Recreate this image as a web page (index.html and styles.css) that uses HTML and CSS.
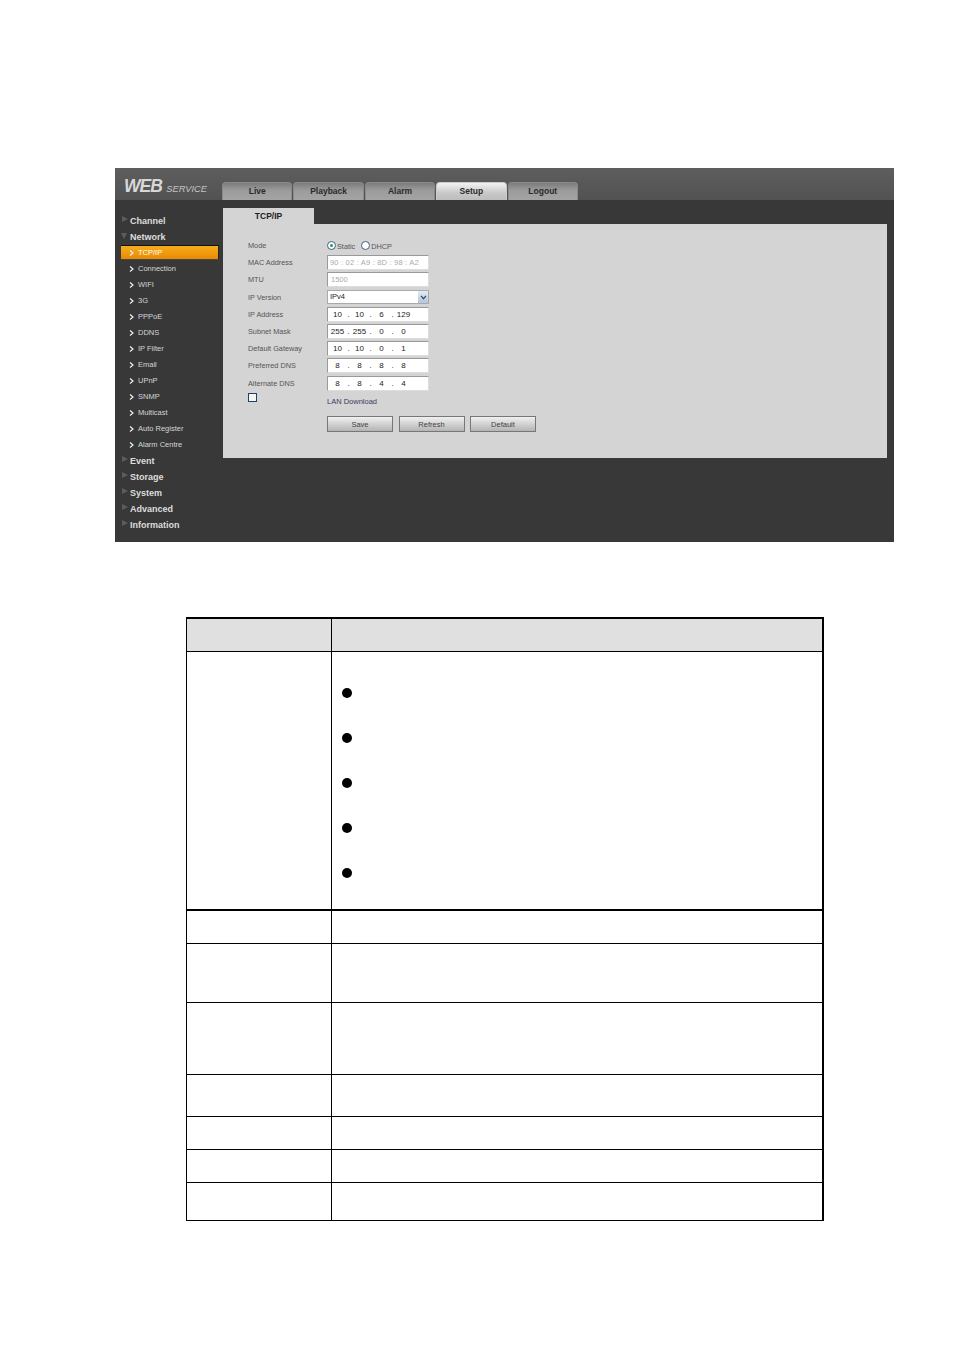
FILE: index.html
```html
<!DOCTYPE html>
<html lang="en">
<head>
    <meta charset="UTF-8">
    <title>TCP/IP Setup</title>
    <link rel="stylesheet" href="styles.css">
</head>
<body>
    <div class="shot">
        <div class="topbar">
            <div class="logo"><b>WEB</b> <span>SERVICE</span></div>
            <div class="tabs">
                <div class="tab">Live</div>
                <div class="tab">Playback</div>
                <div class="tab">Alarm</div>
                <div class="tab active">Setup</div>
                <div class="tab">Logout</div>
            </div>
        </div>
        <div class="main">
            <div class="sidebar">
                <div class="group"><i class="tri"></i>Channel</div>
                <div class="group"><i class="tri down"></i>Network</div>
                <div class="item selected"><svg viewBox="0 0 5 6"><path d="M1 .5 4 3 1 5.5"/></svg>TCP/IP</div>
                <div class="item"><svg viewBox="0 0 5 6"><path d="M1 .5 4 3 1 5.5"/></svg>Connection</div>
                <div class="item"><svg viewBox="0 0 5 6"><path d="M1 .5 4 3 1 5.5"/></svg>WIFI</div>
                <div class="item"><svg viewBox="0 0 5 6"><path d="M1 .5 4 3 1 5.5"/></svg>3G</div>
                <div class="item"><svg viewBox="0 0 5 6"><path d="M1 .5 4 3 1 5.5"/></svg>PPPoE</div>
                <div class="item"><svg viewBox="0 0 5 6"><path d="M1 .5 4 3 1 5.5"/></svg>DDNS</div>
                <div class="item"><svg viewBox="0 0 5 6"><path d="M1 .5 4 3 1 5.5"/></svg>IP Filter</div>
                <div class="item"><svg viewBox="0 0 5 6"><path d="M1 .5 4 3 1 5.5"/></svg>Email</div>
                <div class="item"><svg viewBox="0 0 5 6"><path d="M1 .5 4 3 1 5.5"/></svg>UPnP</div>
                <div class="item"><svg viewBox="0 0 5 6"><path d="M1 .5 4 3 1 5.5"/></svg>SNMP</div>
                <div class="item"><svg viewBox="0 0 5 6"><path d="M1 .5 4 3 1 5.5"/></svg>Multicast</div>
                <div class="item"><svg viewBox="0 0 5 6"><path d="M1 .5 4 3 1 5.5"/></svg>Auto Register</div>
                <div class="item"><svg viewBox="0 0 5 6"><path d="M1 .5 4 3 1 5.5"/></svg>Alarm Centre</div>
                <div class="group"><i class="tri"></i>Event</div>
                <div class="group"><i class="tri"></i>Storage</div>
                <div class="group"><i class="tri"></i>System</div>
                <div class="group"><i class="tri"></i>Advanced</div>
                <div class="group"><i class="tri"></i>Information</div>
            </div>
            <div class="content">
                <div class="panel-tab">TCP/IP</div>
                <div class="panel">
                    <div class="row">
                        <label>Mode</label>
                        <div class="radios">
                            <i class="radio on"></i><span>Static</span>
                            <i class="radio"></i><span>DHCP</span>
                        </div>
                    </div>
                    <div class="row"><label>MAC Address</label><div class="field off mac">90 : 02 : A9 : 8D : 98 : A2</div></div>
                    <div class="row"><label>MTU</label><div class="field off">1500</div></div>
                    <div class="row">
                        <label>IP Version</label>
                        <div class="field select">IPv4<span class="arrow"><svg viewBox="0 0 8 6"><path d="M1 1 4 4.500 7 1"/></svg></span></div>
                    </div>
                    <div class="row"><label>IP Address</label><div class="field ip"><b>10</b><u>.</u><b>10</b><u>.</u><b>6</b><u>.</u><b>129</b></div></div>
                    <div class="row"><label>Subnet Mask</label><div class="field ip"><b>255</b><u>.</u><b>255</b><u>.</u><b>0</b><u>.</u><b>0</b></div></div>
                    <div class="row"><label>Default Gateway</label><div class="field ip"><b>10</b><u>.</u><b>10</b><u>.</u><b>0</b><u>.</u><b>1</b></div></div>
                    <div class="row"><label>Preferred DNS</label><div class="field ip"><b>8</b><u>.</u><b>8</b><u>.</u><b>8</b><u>.</u><b>8</b></div></div>
                    <div class="row"><label>Alternate DNS</label><div class="field ip"><b>8</b><u>.</u><b>8</b><u>.</u><b>4</b><u>.</u><b>4</b></div></div>
                    <div class="row lan">
                        <label><i class="check"></i></label>
                        <div class="lan-text">LAN Download</div>
                    </div>
                    <div class="buttons">
                        <div class="btn">Save</div>
                        <div class="btn">Refresh</div>
                        <div class="btn">Default</div>
                    </div>
                </div>
            </div>
        </div>
    </div>

    <table class="params">
        <tr class="head"><th></th><th></th></tr>
        <tr class="r-mode">
            <td></td>
            <td>
                <div class="bullets">
                    <i></i><i></i><i></i><i></i><i></i>
                </div>
            </td>
        </tr>
        <tr class="r1"><td></td><td></td></tr>
        <tr class="r2"><td></td><td></td></tr>
        <tr class="r3"><td></td><td></td></tr>
        <tr class="r4"><td></td><td></td></tr>
        <tr class="r5"><td></td><td></td></tr>
        <tr class="r6"><td></td><td></td></tr>
        <tr class="r7"><td></td><td></td></tr>
    </table>
</body>
</html>
```
FILE: styles.css
```css
body { margin: 0; padding: 168px 0 0 115px; background: #fff; font-family: "Liberation Sans", Arial, sans-serif; }

.shot { width: 779px; height: 374px; background: #383838; }
.topbar { height: 32px; display: flex; background: linear-gradient(#5e5e5e, #525252); }
.logo { width: 107px; padding: 8px 0 0 9px; box-sizing: border-box; color: #ddd; font-style: italic; white-space: nowrap; line-height: 20px; }
.logo b { font-size: 17.5px; letter-spacing: -1px; color: #d8d8d8; }
.logo span { font-size: 9.3px; color: #c4c4c4; }
.tabs { display: flex; gap: 1px; padding-top: 14px; }
.tab { width: 70.4px; height: 18px; line-height: 17px; text-align: center; font-size: 8.5px; font-weight: bold; color: #2a2a2a; border-radius: 4px 4px 0 0; border: 1px solid #8a8a8a; border-bottom: none; box-sizing: border-box; background: linear-gradient(#7c7c7c, #9c9c9c 45%, #a4a4a4); }
.tab.active { background: linear-gradient(#f2f2f2, #c8c8c8 60%, #bdbdbd); border-color: #ccc; }

.main { display: flex; }
.sidebar { width: 108px; padding: 13px 0 0 6px; box-sizing: border-box; }
.group { height: 16px; line-height: 17px; padding-left: 9px; position: relative; font-size: 9px; font-weight: bold; color: #ddd; }
.tri { position: absolute; left: 1px; top: 3px; border-left: 6px solid #5c5c5c; border-top: 3.5px solid transparent; border-bottom: 3.5px solid transparent; }
.tri.down { left: 0; top: 4px; border-left: 3.5px solid transparent; border-right: 3.5px solid transparent; border-top: 6px solid #5c5c5c; border-bottom: none; }
.item { height: 16px; width: 98px; line-height: 16px; display: flex; align-items: center; box-sizing: border-box; padding-left: 8px; font-size: 7.5px; color: #d6d6d6; }
.item svg { width: 5px; height: 6px; margin-right: 4px; fill: none; stroke: #f0f0f0; stroke-width: 1.2; }
.item.selected { background: linear-gradient(#f6ad1c, #e88a04); color: #fff; height: 15px; margin-bottom: 1px; border-top: 1px solid #111; border-right: 1px solid #222; border-bottom: 1px solid #444; }

.content { width: 664px; padding-top: 8px; }
.panel-tab { width: 91px; height: 16px; line-height: 17px; text-align: center; background: #d4d4d4; font-size: 8.5px; font-weight: bold; color: #222; }
.panel { height: 234px; background: #d4d4d4; padding: 13px 0 0 25px; box-sizing: border-box; }
.row { display: flex; height: 17.2px; align-items: center; }
.row label { width: 79px; font-size: 7.3px; color: #555; }
.radios { display: flex; align-items: center; font-size: 7.3px; color: #555; height: 10px; }
.radios span { margin: 1px 6px 0 1px; }
.radio { width: 7px; height: 7px; border-radius: 50%; border: 1px solid #3b5f8a; background: #fff; position: relative; }
.radio.on::after { content: ""; position: absolute; left: 2px; top: 2px; width: 3px; height: 3px; border-radius: 50%; background: #2a9a3a; }
.field { width: 102px; height: 15px; line-height: 13px; box-sizing: border-box; background: #fff; border: 1px solid #aaa; border-color: #999 #ddd #ddd #999; font-size: 7.5px; color: #222; padding-left: 2px; position: relative; }
.field.off { color: #aaa; padding-left: 3px; }
.field.mac { font-size: 7.5px; padding-left: 2px; letter-spacing: 0.2px; }
.select { height: 14px; line-height: 12px; border-color: #aaa; }
.arrow { position: absolute; right: 0; top: 0; width: 10px; height: 12px; background: linear-gradient(#e2ebf5, #b4c6da); display: flex; align-items: center; justify-content: center; }
.arrow svg { width: 7px; height: 5px; fill: none; stroke: #2c4a70; stroke-width: 1.4; }
.ip { display: flex; padding-left: 2px; font-size: 8px; color: #222; }
.ip b { width: 15px; font-weight: normal; text-align: center; }
.ip u { width: 7px; text-decoration: none; text-align: center; }
.lan { height: 16px; align-items: flex-start; }
.check { display: block; width: 7px; height: 7px; border: 1px solid #24406a; background: #f4f4f4; margin-top: 1px; }
.lan-text { font-size: 7.5px; color: #3c3c5c; margin-top: 5px; }
.buttons { display: flex; gap: 5.5px; margin: 8px 0 0 79px; }
.btn { width: 66px; height: 16px; line-height: 15px; text-align: center; box-sizing: border-box; font-size: 7.5px; color: #444; border: 1px solid #777; background: linear-gradient(#f0f0f0, #b4b4b4); }

.params { border-collapse: collapse; table-layout: fixed; width: 638px; height: 603px; margin: 75px 0 0 71px; border: 2px solid #000; border-left-width: 1px; border-bottom-width: 1px; }
.params th, .params td { border: 1px solid #000; padding: 0; }
.params th:first-child, .params td:first-child { width: 144px; }
.head th { background: #e0e0e0; height: 32px; }
.r-mode td { height: 257px; border-bottom-width: 2px; vertical-align: top; }
.bullets { display: flex; flex-direction: column; gap: 35px; padding: 36px 0 0 10px; }
.bullets i { display: block; width: 10px; height: 10px; border-radius: 50%; background: #000; }
.r1 td { height: 32px; }
.r2 td { height: 58px; }
.r3 td { height: 71px; }
.r4 td { height: 41px; }
.r5 td { height: 32px; }
.r6 td { height: 32px; }
.r7 td { height: 37px; }
```
